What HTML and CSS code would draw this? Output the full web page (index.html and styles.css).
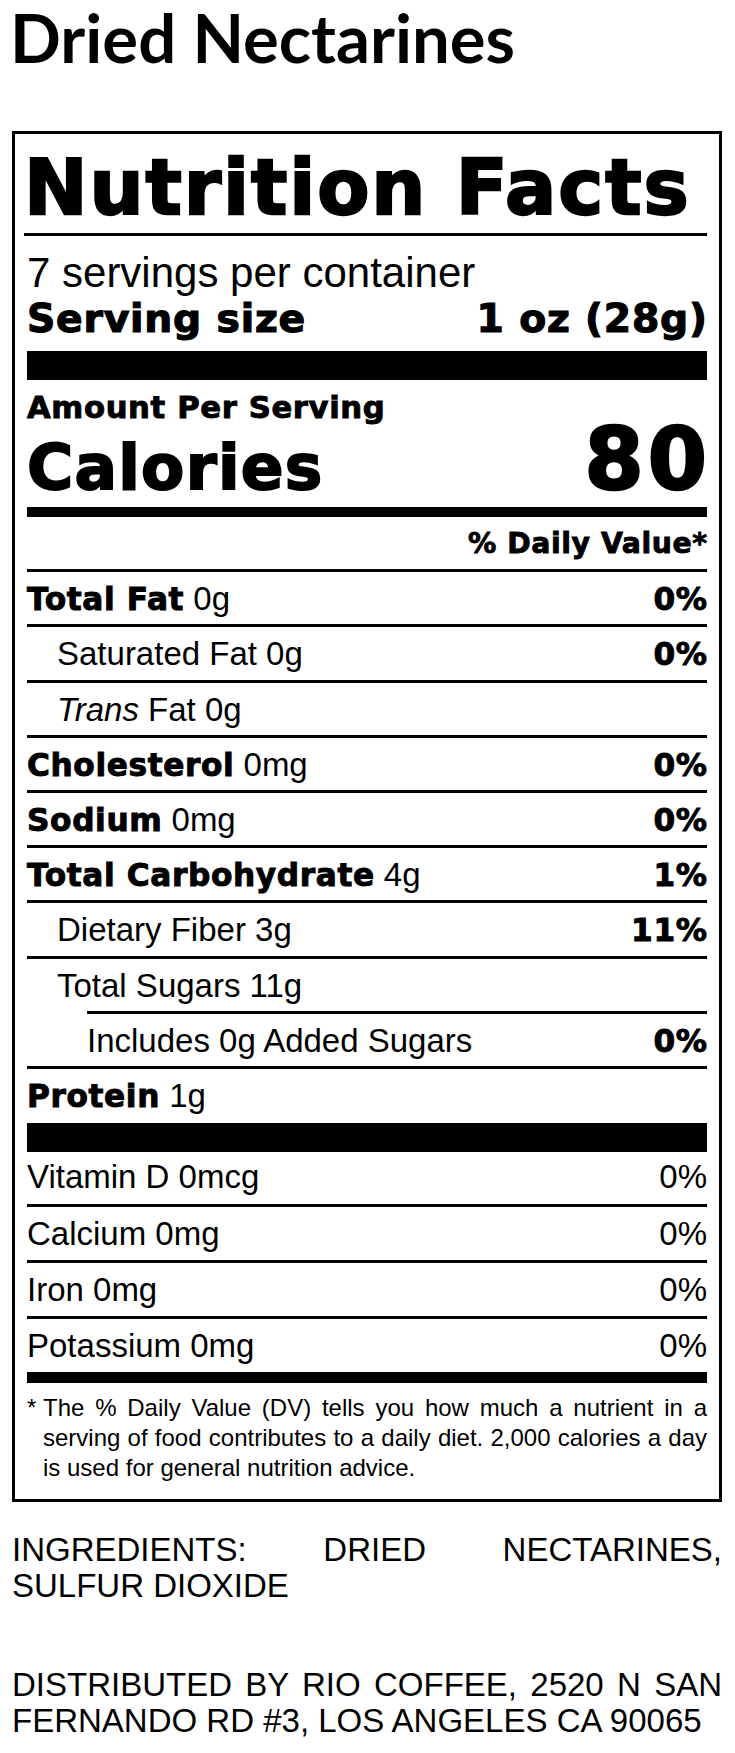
FILE: index.html
```html
<!DOCTYPE html>
<html lang="en">
<head>
<meta charset="utf-8">
<title>Dried Nectarines</title>
<link rel="stylesheet" href="styles.css">
</head>
<body>
<h1 class="title">Dried Nectarines</h1>
<section class="label">
  <h2 class="nf-title b">Nutrition Facts</h2>
  <div class="servings">
    <div class="servings-count">7 servings per container</div>
    <div class="serving-size"><span class="b">Serving size</span><span class="b end">1 oz (28g)</span></div>
  </div>
  <div class="amount">
    <div class="amount-head b">Amount Per Serving</div>
    <div class="calories"><span class="b cal-label">Calories</span><span class="b cal-value">80</span></div>
  </div>
  <div class="dv-head"><span class="b end">% Daily Value*</span></div>
  <div class="row"><span><span class="b">Total Fat</span> 0g</span><span class="b end">0%</span></div>
  <div class="row indent1"><span>Saturated Fat 0g</span><span class="b end">0%</span></div>
  <div class="row indent1"><span><i>Trans</i> Fat 0g</span></div>
  <div class="row"><span><span class="b">Cholesterol</span> 0mg</span><span class="b end">0%</span></div>
  <div class="row"><span><span class="b">Sodium</span> 0mg</span><span class="b end">0%</span></div>
  <div class="row"><span><span class="b">Total Carbohydrate</span> 4g</span><span class="b end">1%</span></div>
  <div class="row indent1"><span>Dietary Fiber 3g</span><span class="b end">11%</span></div>
  <div class="row indent1"><span>Total Sugars 11g</span></div>
  <div class="row indent2"><span>Includes 0g Added Sugars</span><span class="b end">0%</span></div>
  <div class="row last"><span><span class="b">Protein</span> 1g</span></div>
  <div class="bar-thick"></div>
  <div class="row vit first"><span>Vitamin D 0mcg</span><span>0%</span></div>
  <div class="row vit"><span>Calcium 0mg</span><span>0%</span></div>
  <div class="row vit"><span>Iron 0mg</span><span>0%</span></div>
  <div class="row vit"><span>Potassium 0mg</span><span>0%</span></div>
  <div class="bar-medium"></div>
  <div class="footnote"><span class="star">*</span><p class="foot-text">The % Daily Value (DV) tells you how much a nutrient in a serving of food contributes to a daily diet. 2,000 calories a day is used for general nutrition advice.</p></div>
</section>
<p class="ingredients">INGREDIENTS: DRIED NECTARINES, SULFUR DIOXIDE</p>
<p class="distributor">DISTRIBUTED BY RIO COFFEE, 2520 N SAN FERNANDO RD #3, LOS ANGELES CA 90065</p>
</body>
</html>
```
FILE: styles.css
```css
html, body {
  margin: 0;
  padding: 0;
  background: #fff;
}

body {
  width: 735px;
  box-sizing: border-box;
  padding: 0 13px 0 12px;
  font-family: "Liberation Sans", Arial, sans-serif;
  color: #000;
}

.title {
  margin: -3px 0 0 -2px;
  font-family: Lato, "Liberation Sans", sans-serif;
  font-weight: 700;
  font-size: 67px;
  line-height: 80px;
}

.b {
  font-family: "DejaVu Sans", "Liberation Sans", sans-serif;
  font-weight: 700;
  -webkit-text-stroke: 0.03em #000;
  letter-spacing: 0.02em;
}

.end {
  margin-right: -0.02em;
}

.label {
  margin-top: 54px;
  border: 3px solid #000;
  padding: 12px 12px 16.5px;
}

.nf-title {
  margin: 1px 0 0 -3px;
  font-size: 76px;
  letter-spacing: 0.025em;
  line-height: 82px;
  padding-bottom: 4px;
  border-bottom: 3px solid #000;
}

.servings {
  margin-top: 13.5px;
  padding-bottom: 9px;
  border-bottom: 29px solid #000;
  line-height: 45.5px;
}

.servings-count {
  font-size: 42px;
}

.serving-size {
  display: flex;
  justify-content: space-between;
  align-items: baseline;
  font-size: 39.3px;
  padding-top: 1px;
}

.amount {
  padding: 10.5px 0 7px;
  border-bottom: 10px solid #000;
}

.amount-head {
  font-size: 30.7px;
  line-height: 36px;
}

.calories {
  display: flex;
  justify-content: space-between;
  align-items: baseline;
  line-height: 64px;
  margin-top: 1.5px;
}

.cal-label {
  font-size: 63px;
}

.cal-value {
  font-size: 85px;
  letter-spacing: 0.05em;
  margin-right: -0.05em;
}

.dv-head {
  text-align: right;
  font-size: 28.3px;
  line-height: 34px;
  padding: 9.4px 0 8.4px;
}

.row {
  display: flex;
  justify-content: space-between;
  align-items: baseline;
  box-sizing: border-box;
  height: 55.2px;
  padding-top: 9px;
  border-top: 3px solid #000;
  font-size: 33px;
  line-height: 36px;
}

.row .b {
  font-size: 31.2px;
}

.row.last {
  height: 56.7px;
}

.row.vit {
  height: 56px;
}

.row.vit.first {
  border-top: 0;
  height: 52.5px;
  padding-top: 7px;
}

.indent1 {
  padding-left: 30px;
}

.indent2 {
  margin-left: 60px;
}

.bar-thick {
  height: 29px;
  background: #000;
}

.bar-medium {
  height: 10.5px;
  background: #000;
}

.footnote {
  display: flex;
  padding-top: 10px;
  font-size: 24px;
  line-height: 30px;
}

.star {
  flex: 0 0 16px;
}

.foot-text {
  margin: 0;
  flex: 1;
  text-align: justify;
}

.ingredients,
.distributor {
  margin: 30px 0 0;
  font-size: 33px;
  line-height: 36px;
  text-align: justify;
}

.distributor {
  margin-top: 63px;
}
```
